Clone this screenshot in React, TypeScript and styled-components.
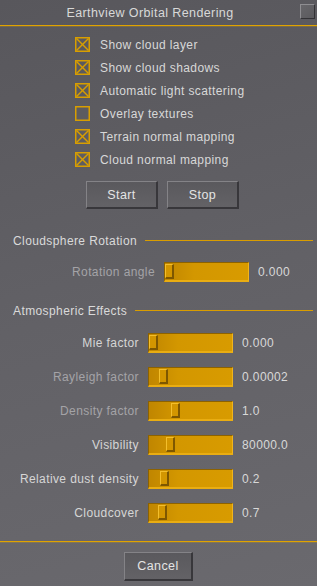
import React from "react";
import styled, { createGlobalStyle } from "styled-components";

const Global = createGlobalStyle`
  html, body { margin: 0; padding: 0; background: #5f5e63; }
  #root { width: 317px; height: 586px; }
`;

const Dialog = styled.div`
  width: 317px;
  height: 586px;
  box-sizing: border-box;
  display: flex;
  flex-direction: column;
  background: linear-gradient(165deg, #58575c 0%, #626166 50%, #6a696e 100%);
  font-family: "Liberation Sans", Arial, sans-serif;
  font-size: 12px;
  letter-spacing: 0.4px;
  color: #d6d6d6;
  overflow: hidden;
`;

const TitleBar = styled.div`
  height: 25px;
  display: flex;
  align-items: center;
  padding-right: 2px;
`;

const Title = styled.div`
  flex: 1;
  text-align: center;
  color: #d8d8d8;
  font-size: 12.5px;
  padding-top: 1px;
`;

const CloseBox = styled.div`
  width: 15px;
  height: 15px;
  box-sizing: border-box;
  margin-top: -3px;
  background: linear-gradient(135deg, #67666a, #5b5a5e);
  border-top: 1px solid #8e8d91;
  border-left: 1px solid #8e8d91;
  border-right: 1px solid #333236;
  border-bottom: 1px solid #333236;
`;

const Rule = styled.div<{ $top?: number }>`
  height: 1px;
  background: #e0a300;
  box-shadow: 0 0.5px 0 rgba(224, 163, 0, 0.45);
  margin-top: ${(p) => p.$top ?? 0}px;
`;

const CheckList = styled.div`
  display: flex;
  flex-direction: column;
  padding: 7px 0 0 75px;
`;

const CheckRow = styled.div`
  height: 23px;
  display: flex;
  align-items: center;
  gap: 10px;
`;

const BoxFrame = styled.svg`
  width: 15px;
  height: 15px;
  flex: none;
`;

const CheckLabel = styled.span`
  color: #d8d8d8;
`;

const Check: React.FC<{ on: boolean }> = ({ on }) => (
  <BoxFrame viewBox="0 0 15 15">
    <rect x="0.75" y="0.75" width="13.5" height="13.5" fill="none" stroke="#d89e00" strokeWidth="1.5" />
    {on && (
      <g stroke="#d89e00" strokeWidth="1.4">
        <line x1="1.5" y1="1.5" x2="13.5" y2="13.5" />
        <line x1="13.5" y1="1.5" x2="1.5" y2="13.5" />
      </g>
    )}
  </BoxFrame>
);

const ButtonRow = styled.div<{ $left?: number; $top: number }>`
  display: flex;
  gap: 9px;
  margin-top: ${(p) => p.$top}px;
  padding-left: ${(p) => p.$left ?? 0}px;
`;

const Button = styled.div<{ $w: number; $h: number }>`
  width: ${(p) => p.$w}px;
  height: ${(p) => p.$h}px;
  box-sizing: border-box;
  display: flex;
  align-items: center;
  justify-content: center;
  color: #e4e4e4;
  font-size: 12.5px;
  background: linear-gradient(180deg, #5a595d, #636266);
  border-top: 1px solid #848387;
  border-left: 1px solid #848387;
  border-right: 2px solid #38373b;
  border-bottom: 2px solid #38373b;
`;

const SectionHeader = styled.div<{ $top: number }>`
  height: 20px;
  display: flex;
  align-items: center;
  margin-top: ${(p) => p.$top}px;
  padding: 0 4px 0 13px;
  color: #dadada;
`;

const SectionLine = styled.div`
  flex: 1;
  height: 1px;
  margin-left: 8px;
  margin-top: -1px;
  background: #d99d00;
`;

const SliderList = styled.div<{ $top: number }>`
  display: flex;
  flex-direction: column;
  gap: 14px;
  margin-top: ${(p) => p.$top}px;
`;

const SliderRow = styled.div<{ $labelW: number }>`
  height: 20px;
  display: grid;
  grid-template-columns: ${(p) => p.$labelW}px 85px auto;
  column-gap: 9px;
  align-items: center;
`;

const SliderLabel = styled.span<{ $dim?: boolean }>`
  text-align: right;
  color: ${(p) => (p.$dim ? "#a4a3a7" : "#d6d6d6")};
  white-space: nowrap;
`;

const Track = styled.div`
  position: relative;
  height: 20px;
  box-sizing: border-box;
  background: linear-gradient(90deg, #c08600 0%, #d39700 35%, #d89b00 100%);
  border-top: 1px solid #8d6200;
  border-left: 1px solid #8d6200;
  border-right: 1px solid #f0b51c;
  border-bottom: 2px solid #e9ad12;
`;

const Thumb = styled.div<{ $x: number }>`
  position: absolute;
  top: 1px;
  left: ${(p) => p.$x}px;
  width: 9px;
  height: 15px;
  box-sizing: border-box;
  background: #d39600;
  border-top: 1px solid #f3be2c;
  border-left: 1px solid #f3be2c;
  border-right: 2px solid #7e5700;
  border-bottom: 2px solid #7e5700;
`;

const Value = styled.span`
  color: #d8d8d8;
`;

const Slider: React.FC<{ x: number }> = ({ x }) => (
  <Track>
    <Thumb $x={x} />
  </Track>
);

const checks: [string, boolean][] = [
  ["Show cloud layer", true],
  ["Show cloud shadows", true],
  ["Automatic light scattering", true],
  ["Overlay textures", false],
  ["Terrain normal mapping", true],
  ["Cloud normal mapping", true],
];

const atmos: { label: string; value: string; x: number; dim?: boolean }[] = [
  { label: "Mie factor", value: "0.000", x: 0 },
  { label: "Rayleigh factor", value: "0.00002", x: 10, dim: true },
  { label: "Density factor", value: "1.0", x: 22, dim: true },
  { label: "Visibility", value: "80000.0", x: 17 },
  { label: "Relative dust density", value: "0.2", x: 11 },
  { label: "Cloudcover", value: "0.7", x: 9 },
];

export default function App() {
  return (
    <>
      <Global />
      <Dialog>
        <TitleBar>
          <Title>Earthview Orbital Rendering</Title>
          <CloseBox />
        </TitleBar>
        <Rule />
        <CheckList>
          {checks.map(([label, on]) => (
            <CheckRow key={label}>
              <Check on={on} />
              <CheckLabel>{label}</CheckLabel>
            </CheckRow>
          ))}
        </CheckList>
        <ButtonRow $top={10} $left={86}>
          <Button $w={72} $h={28}>Start</Button>
          <Button $w={72} $h={28}>Stop</Button>
        </ButtonRow>
        <SectionHeader $top={22}>
          Cloudsphere Rotation
          <SectionLine />
        </SectionHeader>
        <SliderList $top={11}>
          <SliderRow $labelW={155}>
            <SliderLabel $dim>Rotation angle</SliderLabel>
            <Slider x={0} />
            <Value>0.000</Value>
          </SliderRow>
        </SliderList>
        <SectionHeader $top={19}>
          Atmospheric Effects
          <SectionLine />
        </SectionHeader>
        <SliderList $top={12}>
          {atmos.map((r) => (
            <SliderRow key={r.label} $labelW={139}>
              <SliderLabel $dim={r.dim}>{r.label}</SliderLabel>
              <Slider x={r.x} />
              <Value>{r.value}</Value>
            </SliderRow>
          ))}
        </SliderList>
        <Rule $top={18} />
        <ButtonRow $top={10} $left={124}>
          <Button $w={69} $h={29}>Cancel</Button>
        </ButtonRow>
      </Dialog>
    </>
  );
}
